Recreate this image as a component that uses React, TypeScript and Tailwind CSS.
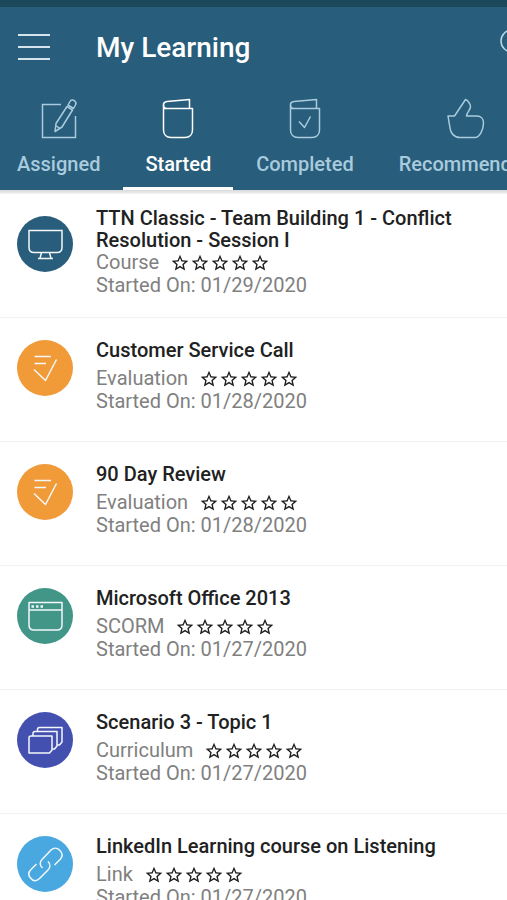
import type { ReactNode } from 'react';
import { MdStarBorder } from 'react-icons/md';

function Drawing({ className, children, box = '0 0 40 44' }: { className: string; children: ReactNode; box?: string }) {
  return (
    <svg
      className={className}
      viewBox={box}
      fill="none"
      stroke="currentColor"
      strokeWidth="1.5"
      strokeLinejoin="round"
      aria-hidden="true"
    >
      {children}
    </svg>
  );
}

const tabIcon = 'h-11 w-10';

const AssignedIcon = () => (
  <Drawing className={tabIcon}>
    <path d="M22 7.500H3.500V40.500H36.500V19" strokeLinejoin="miter" />
    <path d="M28 9.500L33.500 13L23 30L16 34.500L17 26.500Z" />
    <path d="M29 8L31 4.500C33 1 38.500 4.500 36.500 8L34.500 11.500Z" />
    <path d="M16.500 28.500L21 31.500" />
  </Drawing>
);

const Book = () => (
  <>
    <path d="M5.500 11.500H34.500V33C34.500 37.500 31.500 40.500 27 40.500H13C8.500 40.500 5.500 37.500 5.500 33V7.500C5.500 5.500 7 4.800 9 4.500L31.500 2.500V11" />
    <path d="M5.500 8C5.500 10 6.500 11.500 8.500 11.500" />
  </>
);

const StartedIcon = () => (
  <Drawing className={tabIcon}>
    <Book />
  </Drawing>
);

const CompletedIcon = () => (
  <Drawing className={tabIcon}>
    <Book />
    <path d="M14 24.500L19.500 30.500L25.500 19.500" />
  </Drawing>
);

const ThumbIcon = () => (
  <Drawing className={tabIcon}>
    <path d="M2 19H8.500L19.500 2.500C21.500 3 24.500 7 24.500 9.500C24.500 13 21 15 20.500 19H31C35 19 37.500 22 37.500 26C37.500 33 33.500 40.500 29 40.500H14C8 40.500 4.500 36 4 31Z" />
  </Drawing>
);

const glyph = 'size-14';
const glyphBox = '0 0 56 56';

const MonitorIcon = () => (
  <Drawing className={glyph} box={glyphBox}>
    <path d="M12 14.500H45V31.500C45 34.500 43 36.500 40 36.500H17C14 36.500 12 34.500 12 31.500Z" strokeLinejoin="miter" />
    <path d="M24.500 36.500L23 42.500M32.500 36.500L34 42.500M21 42.500H36" />
  </Drawing>
);

const ChecklistIcon = () => (
  <Drawing className={glyph} box={glyphBox}>
    <path d="M17.500 16.500H34M17.500 23.500H29M17 29.500L28.500 40.500L39.500 19.500" />
  </Drawing>
);

const WindowIcon = () => (
  <Drawing className={glyph} box={glyphBox}>
    <path d="M12 14.500H45V37C45 40 43 42 40 42H17C14 42 12 40 12 37ZM12 22H45" />
    <path d="M14.500 18.500H17M19 18.500H21.500M23.500 18.500H26" strokeWidth="2.500" />
  </Drawing>
);

const StackIcon = () => (
  <Drawing className={glyph} box={glyphBox}>
    <path d="M12 26Q12 24 14 24H35V38L32.500 41H12Z" />
    <path d="M16 24V21.500Q16 19.500 18 19.500H40V34L37.500 37H35" />
    <path d="M20.500 19.500V17.500Q20.500 15.500 22.500 15.500H45V30L42.500 33H40" />
  </Drawing>
);

const LinkIcon = () => (
  <Drawing className={glyph} box={glyphBox}>
    <path d="M25.500 32C22.500 29.500 22.500 26 25 23.500L34 14C36.500 11.500 40 11.500 42.500 14C45.500 17 46 20 43.500 23L37.500 29" />
    <path d="M31 25.500C33.500 28 33.500 31.500 31 34L22.500 42.500C19.500 45.500 16.500 45.500 14 42.500C11 39.500 11 36.500 14 33.500L19.500 28" />
  </Drawing>
);

const tabs = [
  { label: 'Assigned', icon: <AssignedIcon />, pad: 'pl-[17px] pr-[23px]' },
  { label: 'Started', icon: <StartedIcon />, pad: 'px-[22px]', active: true },
  { label: 'Completed', icon: <CompletedIcon />, pad: 'px-[23px]' },
  { label: 'Recommended', icon: <ThumbIcon />, pad: 'px-[22px]' },
];

const courses = [
  { title: 'TTN Classic - Team Building 1 - Conflict Resolution - Session I', kind: 'Course', date: '01/29/2020', color: 'bg-[#285d7b]', icon: <MonitorIcon /> },
  { title: 'Customer Service Call', kind: 'Evaluation', date: '01/28/2020', color: 'bg-[#f09a38]', icon: <ChecklistIcon /> },
  { title: '90 Day Review', kind: 'Evaluation', date: '01/28/2020', color: 'bg-[#f09a38]', icon: <ChecklistIcon /> },
  { title: 'Microsoft Office 2013', kind: 'SCORM', date: '01/27/2020', color: 'bg-[#429688]', icon: <WindowIcon /> },
  { title: 'Scenario 3 - Topic 1', kind: 'Curriculum', date: '01/27/2020', color: 'bg-[#4350b0]', icon: <StackIcon /> },
  { title: 'LinkedIn Learning course on Listening', kind: 'Link', date: '01/27/2020', color: 'bg-[#4aa8e0]', icon: <LinkIcon /> },
];

function Rating() {
  return (
    <span className="flex text-[20px] text-[#1c1c1c]" role="img" aria-label="Not rated">
      {[1, 2, 3, 4, 5].map((n) => (
        <MdStarBorder key={n} />
      ))}
    </span>
  );
}

export default function App() {
  return (
    <div className="h-screen overflow-hidden bg-white font-['Roboto',sans-serif]">
      <header className="relative overflow-hidden border-t-[7px] border-[#1c485c] bg-[#285d7b] text-white">
        <div className="flex h-20 items-center pl-[18px]">
          <button type="button" aria-label="Open menu" className="flex w-8 flex-col gap-[10px]">
            <span className="h-[2px] w-full bg-[#d5e4ed]" />
            <span className="h-[2px] w-full bg-[#d5e4ed]" />
            <span className="h-[2px] w-full bg-[#d5e4ed]" />
          </button>
          <h1 className="ml-[46px] pt-0.5 text-[28px] leading-8 font-medium">My Learning</h1>
          <button type="button" aria-label="Search" className="-mr-[26px] ml-auto shrink-0 text-[#b9d9ea]">
            <Drawing className="size-9" box="0 0 36 36">
              <circle cx="15" cy="12" r="11" />
              <path d="M23 20L34 31" />
            </Drawing>
          </button>
        </div>
        <div role="tablist" className="flex">
          {tabs.map((tab) => (
            <button
              key={tab.label}
              type="button"
              role="tab"
              aria-selected={!!tab.active}
              className={`flex shrink-0 flex-col items-center border-b-[3px] pt-[10px] pb-[11px] ${tab.pad} ${
                tab.active ? 'border-white text-white' : 'border-transparent text-[#a9cbdd]'
              }`}
            >
              {tab.icon}
              <span className="mt-[11px] text-[20px] leading-6 font-medium">{tab.label}</span>
            </button>
          ))}
        </div>
      </header>
      <main>
        <div className="h-1 bg-linear-to-b from-[#d9d9d9] to-[#f4f4f4]" />
        <ul>
          {courses.map((course) => (
            <li key={course.title} className="flex min-h-[124px] items-center border-b border-[#f3f3f3] pr-4 pb-[7px] pl-[17px]">
              <div className={`mt-[22px] flex shrink-0 self-start rounded-full text-[#f2f7fa] ${course.color}`}>{course.icon}</div>
              <div className="ml-[23px] text-[20px]">
                <h2 className="min-h-7 leading-[22px] font-medium text-[#212121]">{course.title}</h2>
                <div className="flex items-center gap-[11px] leading-[23px] text-[#808080]">
                  <span>{course.kind}</span>
                  <Rating />
                </div>
                <p className="leading-[23px] text-[#808080]">Started On: {course.date}</p>
              </div>
            </li>
          ))}
        </ul>
      </main>
    </div>
  );
}
